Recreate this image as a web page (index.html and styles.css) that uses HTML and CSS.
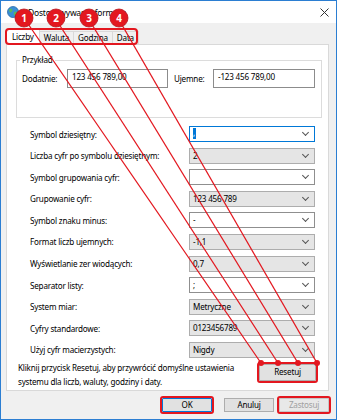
FILE: index.html
```html
<!DOCTYPE html>
<html>
<head>
  <meta charset="UTF-8">
  <title>Dostosowywanie formatu</title>
  <link rel="stylesheet" href="styles.css">
</head>
<body>

  <div class="window">
    <div class="titlebar">
      <svg class="app-icon" width="12" height="12" viewBox="0 0 12 12">
        <circle cx="6" cy="6" r="5.5" fill="#3a8fd6"/>
        <path d="M2 3.5 L4.5 2.5 L5.5 4.5 L4 6.5 L2.5 6 Z" fill="#5cb85c"/>
        <path d="M7 6 L9.5 5.5 L10 8 L8 10 L6.8 8.5 Z" fill="#5cb85c"/>
        <circle cx="6" cy="6" r="5.5" fill="none" stroke="#2a6aa8" stroke-width="0.8"/>
      </svg>
      <span class="title">Dostosowywanie formatu</span>
      <svg class="close" width="9" height="9" viewBox="0 0 9 9">
        <path d="M0.5 0.5 L8.5 8.5 M8.5 0.5 L0.5 8.5" stroke="#333" stroke-width="1"/>
      </svg>
    </div>

    <div class="content">
      <div class="tabs">
        <div class="tab active">Liczby</div>
        <div class="tab">Waluta</div>
        <div class="tab">Godzina</div>
        <div class="tab">Data</div>
      </div>

      <div class="panel">
        <fieldset class="example">
          <legend>Przykład</legend>
          <div class="sample">
            <span>Dodatnie:</span>
            <div class="sample-box">123 456 789,00</div>
            <span class="sample-neg">Ujemne:</span>
            <div class="sample-box">-123 456 789,00</div>
          </div>
        </fieldset>

        <div class="settings">
          <div class="row"><span>Symbol dziesiętny:</span><div class="combo edit focus"><span class="sel">,</span></div></div>
          <div class="row"><span>Liczba cyfr po symbolu dziesiętnym:</span><div class="combo">2</div></div>
          <div class="row"><span>Symbol grupowania cyfr:</span><div class="combo edit"></div></div>
          <div class="row"><span>Grupowanie cyfr:</span><div class="combo">123 456 789</div></div>
          <div class="row"><span>Symbol znaku minus:</span><div class="combo edit">-</div></div>
          <div class="row"><span>Format liczb ujemnych:</span><div class="combo">-1,1</div></div>
          <div class="row"><span>Wyświetlanie zer wiodących:</span><div class="combo">0,7</div></div>
          <div class="row"><span>Separator listy:</span><div class="combo edit">;</div></div>
          <div class="row"><span>System miar:</span><div class="combo">Metryczne</div></div>
          <div class="row"><span>Cyfry standardowe:</span><div class="combo">0123456789</div></div>
          <div class="row"><span>Użyj cyfr macierzystych:</span><div class="combo">Nigdy</div></div>
        </div>

        <div class="reset">
          <p>Kliknij przycisk Resetuj, aby przywrócić domyślne ustawienia<br>systemu dla liczb, waluty, godziny i daty.</p>
          <button class="btn marked reset-btn">Resetuj</button>
        </div>
      </div>

      <div class="actions">
        <button class="btn default marked ok-btn">OK</button>
        <button class="btn">Anuluj</button>
        <button class="btn marked" disabled>Zastosuj</button>
      </div>
    </div>

    <!-- annotation layer drawn over the dialog -->
    <svg class="annotations" width="337" height="420" viewBox="0 0 337 420">
      <rect x="6" y="29" width="131" height="15" rx="3" fill="none" stroke="#e3171f" stroke-width="2"/>
      <g stroke="#e3171f" stroke-width="1.3">
        <line x1="24" y1="18" x2="261" y2="363"/>
        <line x1="55" y1="18" x2="278" y2="363"/>
        <line x1="88" y1="18" x2="298" y2="363"/>
        <line x1="118" y1="18" x2="317" y2="363"/>
      </g>
      <g fill="#e3171f">
        <circle cx="261" cy="363" r="3"/>
        <circle cx="278" cy="363" r="3"/>
        <circle cx="298" cy="363" r="3"/>
        <circle cx="317" cy="363" r="3"/>
      </g>
      <g class="badge">
        <circle cx="24" cy="18" r="9"/>
        <circle cx="56" cy="18" r="9"/>
        <circle cx="89" cy="18" r="9"/>
        <circle cx="119" cy="18" r="9"/>
      </g>
      <g class="badge-num">
        <text x="24" y="21.5">1</text>
        <text x="56" y="21.5">2</text>
        <text x="89" y="21.5">3</text>
        <text x="119" y="21.5">4</text>
      </g>
    </svg>
  </div>

</body>
</html>
```

FILE: styles.css
```css
body {
  margin: 0;
  font-family: "Noto Sans", "Open Sans", sans-serif;
  font-size: 8.1px;
  letter-spacing: -0.2px;
  color: #000;
}
.window {
  position: relative;
  width: 337px;
  height: 420px;
  box-sizing: border-box;
  border: 1px solid #2b7ed2;
  background-color: #f0f0f0;
  overflow: hidden;
}
.titlebar {
  height: 22px;
  background-color: #fff;
  display: flex;
  align-items: center;
  padding-left: 6px;
}
.app-icon {
  margin-top: -1px;
}
.title {
  margin-left: 9px;
  font-size: 8.5px;
}
.close {
  margin-left: auto;
  margin-right: 7px;
}
.content {
  padding: 6px 7px 0 5px;
}
.tabs {
  display: flex;
  align-items: flex-end;
  height: 15px;
  position: relative;
  z-index: 1;
}
.tab {
  height: 13px;
  line-height: 12px;
  padding: 0 4px;
  border: 1px solid #d9d9d9;
  border-bottom: none;
  box-sizing: border-box;
  margin-right: -1px;
  white-space: nowrap;
}
.tab.active {
  height: 16px;
  margin-bottom: -1px;
  background-color: #fff;
  padding: 1px 5px 0;
}
.panel {
  height: 347px;
  box-sizing: border-box;
  background-color: #fff;
  border: 1px solid #d9d9d9;
  padding: 0;
}
.example {
  margin: 9px 6px 0 9px;
  padding: 3px 6px 29px 5px;
  border: 1px solid #dcdcdc;
  min-width: 0;
}
.example legend {
  padding: 0 2px;
  margin-left: -2px;
  line-height: 12px;
}
.sample {
  display: grid;
  grid-template-columns: 45px 101px 45px 102px;
  align-items: start;
}
.sample span {
  line-height: 19px;
}
.sample-neg {
  padding-left: 6px;
}
.sample-box {
  height: 19px;
  box-sizing: border-box;
  border: 1px solid #8c8c8c;
  padding: 1px 4px;
  line-height: 12px;
}
.settings {
  margin-top: 8px;
  padding: 0 13px 0 23px;
  display: grid;
  row-gap: 5.6px;
}
.row {
  display: grid;
  grid-template-columns: 1fr 126px;
  align-items: center;
  height: 16px;
  white-space: nowrap;
}
.combo {
  position: relative;
  height: 16px;
  box-sizing: border-box;
  border: 1px solid #adadad;
  background-color: #e5e5e5;
  padding-left: 3px;
  line-height: 14px;
}
.combo.edit {
  background-color: #fff;
  border-color: #8f8f8f;
}
.combo.focus {
  border-color: #0078d7;
}
.combo::after {
  content: "";
  position: absolute;
  right: 6px;
  top: 3px;
  width: 4px;
  height: 4px;
  border-right: 1px solid #555;
  border-bottom: 1px solid #555;
  transform: rotate(45deg);
}
.sel {
  display: inline-block;
  background-color: #0078d7;
  color: #fff;
  width: 3px;
  height: 11px;
  line-height: 10px;
  vertical-align: top;
  margin-top: 1px;
}
.reset {
  display: flex;
  justify-content: space-between;
  align-items: flex-start;
  padding: 3px 12px 0 11px;
}
.reset p {
  margin: 0;
  line-height: 14px;
  white-space: nowrap;
}
.btn {
  font-family: inherit;
  font-size: inherit;
  letter-spacing: inherit;
  color: #000;
  background-color: #e1e1e1;
  border: 1px solid #adadad;
  padding: 0;
  height: 14px;
  line-height: 12px;
}
.reset-btn {
  width: 57px;
  height: 17px;
  margin-top: 3px;
}
.marked {
  outline: 2px solid #e3171f;
  outline-offset: 0;
  border-radius: 1px;
}
.btn.default {
  border-color: #0078d7;
}
.btn:disabled {
  color: #a0a0a0;
  background-color: #e8e8e8;
  border-color: #c6c6c6;
}
.actions {
  display: flex;
  justify-content: flex-end;
  gap: 5px;
  margin-top: 7px;
}
.actions .btn {
  width: 50px;
}
.actions .ok-btn {
  margin-right: 7px;
}
.annotations {
  position: absolute;
  left: -1px;
  top: -1px;
  pointer-events: none;
  z-index: 2;
}
.badge circle {
  fill: #e3171f;
  stroke: #b5121a;
  stroke-width: 0.8;
}
.badge-num text {
  fill: #fff;
  font-family: "Noto Sans", sans-serif;
  font-size: 10px;
  font-weight: bold;
  letter-spacing: 0;
  text-anchor: middle;
}
```
